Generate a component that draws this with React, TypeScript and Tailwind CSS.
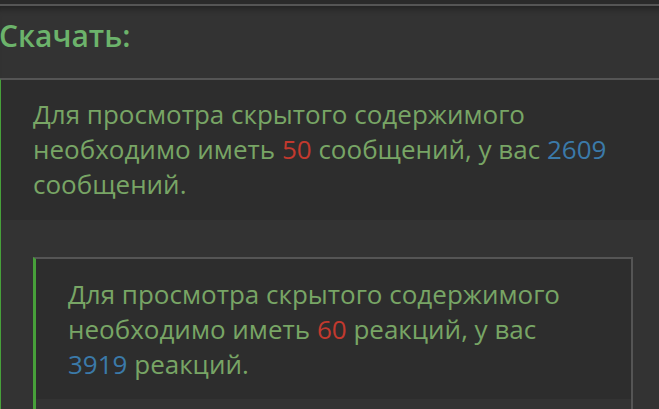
import React from "react";

const green = "text-[#78a565]";

function HiddenNotice({ need, have, unit }: { need: number; have: number; unit: string }) {
  return (
    <p className={`${green} text-[26px] leading-[35px]`}>
      Для просмотра скрытого содержимого необходимо иметь{" "}
      <span className="text-[#c2392e]">{need}</span> {unit}, у вас{" "}
      <span className="text-[#3b7aa9]">{have}</span> {unit}.
    </p>
  );
}

export default function App() {
  return (
    <div
      className="w-[659px] h-[409px] overflow-hidden bg-[#333333]"
      style={{ fontFamily: '"Open Sans", "Noto Sans", sans-serif' }}
    >
      <div className="-ml-[2px] w-[667px]">
        <div className="h-[4px] bg-[#2a2a2a]" />
        <div className="h-[74px] border-t-2 border-[#555555] bg-[#333333] pt-[8px] pl-[1px] shadow-[inset_0_6px_6px_-3px_rgba(0,0,0,0.35)]">
          <h2 className="text-[30px] leading-[44px] font-semibold text-[#6cb36b]">Скачать:</h2>
        </div>

        <div className="border-t-2 border-t-[#555555] border-l-[3px] border-l-[#47a03a]">
          <div className="bg-[#2d2d2d] pl-[32px] pr-[32px] pt-[17px] pb-[18px]">
            <HiddenNotice need={50} have={2609} unit="сообщений" />
          </div>

          <div className="bg-[#333333] pl-[32px] pr-[32px] pt-[37px]">
            <div className="border-t-2 border-r-2 border-[#555555] border-l-[3px] border-l-[#47a03a]">
              <div className="bg-[#2d2d2d] pl-[32px] pr-[40px] pt-[18px] pb-[17px]">
                <HiddenNotice need={60} have={3919} unit="реакций" />
              </div>
              <div className="h-[24px] bg-[#333333]" />
            </div>
          </div>
        </div>
      </div>
    </div>
  );
}
